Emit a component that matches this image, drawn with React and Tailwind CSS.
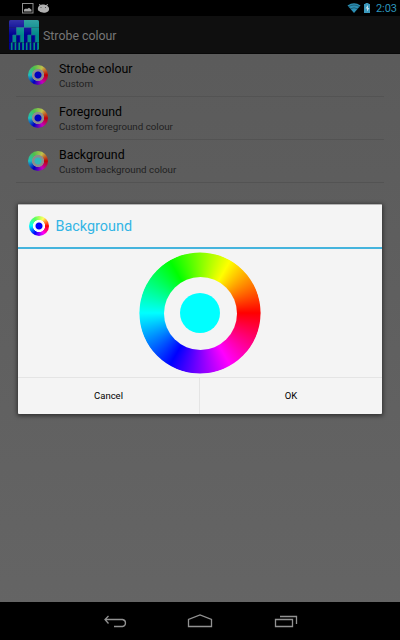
import React from "react";

const HUES =
  "bg-[conic-gradient(from_90deg,#f00,#f0f,#00f,#0ff,#0f0,#ff0,#f00)]";
const ICON_HUES =
  "bg-[conic-gradient(from_90deg,#f00,#f0f,#00f,#0ff,#5cff5c,#ffff5c,#f00)]";
const DIM_HUES =
  "bg-[conic-gradient(from_90deg,#c00000,#c000c0,#0000c0,#1cc0c0,#4cc04c,#c0c04c,#c00000)]";

const BLUE_HUB =
  "bg-[radial-gradient(circle,#0000ff_3px,#fcfcfc_4px,#fcfcfc_5.7px,transparent_6.4px)]";
const DIM_BLUE_HUB =
  "bg-[radial-gradient(circle,#0000c0_3px,#8c8c8c_4px,#8c8c8c_5.7px,transparent_6.4px)]";
const DIM_CYAN_HUB =
  "bg-[radial-gradient(circle,#30b8b8_3px,#8c8c8c_4px,#8c8c8c_5.7px,transparent_6.4px)]";

function Wheel({ dim, hub }) {
  return (
    <div className={`size-5 shrink-0 rounded-full ${dim ? DIM_HUES : ICON_HUES}`}>
      <div className={`size-5 ${hub}`} />
    </div>
  );
}

function StatusBar() {
  return (
    <div className="flex h-4 items-center justify-between bg-black pr-[4px] pl-[22px]">
      <svg width="30" height="16" viewBox="0 0 30 16">
        <rect x="0.5" y="3.5" width="10.5" height="9.5" fill="none" stroke="#8d8d8d" />
        <path d="M2 11.500v-2l2-1 1 .6 2-1.300 2.500 2v1.700z" fill="#a5a5a5" />
        <path d="M17 6c2-2 6-2 8.500 0 2 1.500 2.200 4 .5 5.500-2.500 1.800-6.500 1.600-8.500-.2-2-.5-2.200-3.500-.5-5.300z" fill="#b0b0b0" />
        <path d="M18.500 6l-1-2M24.500 6l1-2" stroke="#b0b0b0" />
        <path d="M18.500 7.500h1M23 7.500h1" stroke="#555" />
      </svg>
      <div className="flex items-center">
        <svg width="29" height="16" viewBox="0 0 29 16">
          <path d="M0.500 5.500Q7 1 13.500 5.500L7 13z" fill="#2c8fb4" />
          <path d="M1 7Q7 3 13 7M3 9Q7 6.500 11 9" fill="none" stroke="#0c313e" strokeWidth=".5" />
          <path d="M17 4h1.500V3h3v1H23v9h-6z" fill="#3b98bc" />
          <path d="M21 5l-2.500 3.500H20V11.500l2.500-3.500H21z" fill="#c3dde6" />
        </svg>
        <span className="w-[20px] pt-[2px] text-[11px] leading-4 tracking-[-0.1px] whitespace-nowrap text-[#2d95bc]">2:03</span>
      </div>
    </div>
  );
}

const LEVELS = [
  { cells: 2, y: 0, h: 7.5 },
  { cells: 4, y: 7.5, h: 7.5 },
  { cells: 8, y: 15, h: 7.5 },
  { cells: 16, y: 22.5, h: 7.5 },
];

function StrobeLogo() {
  return (
    <svg width="30" height="30" viewBox="0 0 30 30">
      <defs>
        <linearGradient id="gloss" x2="0" y2="1">
          <stop stopColor="#fff" stopOpacity=".2" />
          <stop offset=".5" stopColor="#fff" stopOpacity="0" />
        </linearGradient>
        <clipPath id="corners"><rect width="30" height="30" rx="1.500" /></clipPath>
      </defs>
      <g clipPath="url(#corners)">
        {LEVELS.map(({ cells, y, h }) =>
          Array.from({ length: cells }, (_, i) => (
            <rect key={`${cells}-${i}`} x={(i * 30) / cells} y={y} width={30 / cells} height={h} fill={i % 2 ? "#008a8a" : "#000092"} />
          ))
        )}
        <path d="M7.500 15V7.500h15V15M3.750 22.500V15h7.500v7.500M18.750 22.500V15h7.500v7.500" fill="none" stroke="#2468a0" strokeWidth=".6" />
        <rect width="30" height="30" fill="url(#gloss)" />
      </g>
    </svg>
  );
}

function ActionBar() {
  return (
    <div className="flex h-[38px] items-center gap-1 border-b border-[#080808] bg-[#0f0f0f] pl-[9px]">
      <StrobeLogo />
      <h1 className="pt-[2px] text-[12.350px] leading-4 text-[#777]">Strobe colour</h1>
    </div>
  );
}

function Preference({ title, summary, hub }) {
  return (
    <div className="flex h-[43px] items-center gap-[11px] border-b border-[#535353] pl-3">
      <Wheel dim hub={hub} />
      <div className="pt-px">
        <div className="text-[12.350px] leading-4 text-black">{title}</div>
        <div className="text-[9.750px] leading-[14px] text-[#1f1f1f]">{summary}</div>
      </div>
    </div>
  );
}

function Dialog() {
  return (
    <div className="absolute top-[204px] left-[18px] flex h-[210px] w-[364px] flex-col rounded-[1px] border-t border-[#b4b4b4] bg-[#f4f4f4] shadow-[0_1px_4px_1px_rgba(0,0,0,.5)]">
      <div className="flex h-[44px] shrink-0 items-center gap-[6.500px] border-b-2 border-[#45b4dd] pl-[11px]">
        <Wheel hub={BLUE_HUB} />
        <h2 className="pt-[2px] text-[14.400px] leading-5 text-[#33b5e5]">Background</h2>
      </div>
      <div className="flex flex-1 items-center justify-center">
        <div className={`flex size-[122px] items-center justify-center rounded-full [clip-path:circle(60.6px)] ${HUES}`}>
          <div className="flex size-[73px] items-center justify-center rounded-full bg-[#f4f4f4]">
            <div className="size-10 rounded-full bg-[#00ffff]" />
          </div>
        </div>
      </div>
      <div className="flex h-[37px] shrink-0 border-t border-[#e4e4e4] text-[9.500px] text-black">
        <button className="w-[182px] border-r border-[#e4e4e4] pt-px">Cancel</button>
        <button className="flex-1 pt-px">OK</button>
      </div>
    </div>
  );
}

function NavBar() {
  return (
    <div className="h-[38px] bg-black">
      <svg width="400" height="38" viewBox="0 0 400 38" fill="none" stroke="#929292" strokeWidth="1.300">
        <path d="M108.500 14l-3.500 3.500 3.500 4M105.500 17.500H122.500q3 .5 3 3.500t-3 3.500H114" />
        <path d="M188.500 24.500v-7L200 13l11.500 4.500v7z" />
        <path d="M275.500 17.500h17v7h-17zM280 14.500h16.500v7.500" />
      </svg>
    </div>
  );
}

export default function App() {
  return (
    <div className="relative flex h-[640px] w-[400px] flex-col overflow-hidden bg-linear-to-b from-[#5a5a5a] to-[#656565] font-[Roboto,sans-serif]">
      <StatusBar />
      <ActionBar />
      <main className="flex-1 px-4">
        <Preference title="Strobe colour" summary="Custom" hub={DIM_BLUE_HUB} />
        <Preference title="Foreground" summary="Custom foreground colour" hub={DIM_BLUE_HUB} />
        <Preference title="Background" summary="Custom background colour" hub={DIM_CYAN_HUB} />
      </main>
      <NavBar />
      <Dialog />
    </div>
  );
}
